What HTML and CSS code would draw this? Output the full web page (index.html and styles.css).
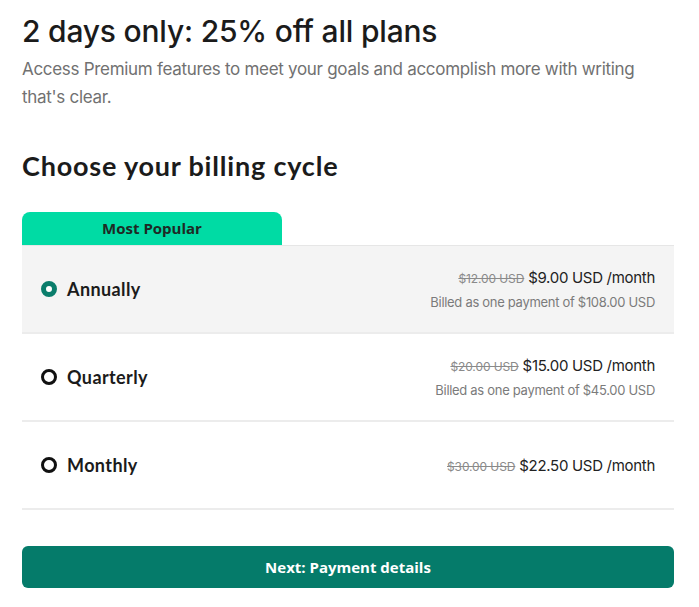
FILE: index.html
```html
<!DOCTYPE html>
<html>
<head lang="en">
    <meta charset="UTF-8">
    <title>Choose your billing cycle</title>
    <link rel="stylesheet" href="styles.css">
</head>
<body>

<div class="page">
    <h1 class="promo-title">2 days only: 25% off all plans</h1>
    <p class="promo-text">Access Premium features to meet your goals and accomplish more with writing that's clear.</p>

    <h2 class="cycle-title">Choose your billing cycle</h2>

    <div class="popular-tab">Most Popular</div>
    <div class="plan-list">
        <div class="plan selected">
            <div class="plan-name"><span class="radio"></span>Annually</div>
            <div class="plan-price">
                <div class="price-line"><s class="old-price">$12.00 USD</s> $9.00 USD /month</div>
                <div class="billed">Billed as one payment of $108.00 USD</div>
            </div>
        </div>
        <div class="plan">
            <div class="plan-name"><span class="radio"></span>Quarterly</div>
            <div class="plan-price">
                <div class="price-line"><s class="old-price">$20.00 USD</s> $15.00 USD /month</div>
                <div class="billed">Billed as one payment of $45.00 USD</div>
            </div>
        </div>
        <div class="plan">
            <div class="plan-name"><span class="radio"></span>Monthly</div>
            <div class="plan-price">
                <div class="price-line"><s class="old-price">$30.00 USD</s> $22.50 USD /month</div>
            </div>
        </div>
    </div>

    <a class="next-button" href="javascript:void(0);">Next: Payment details</a>
</div>

</body>
</html>
```

FILE: styles.css
```css
html, body, h1, h2, p, div, a {
    padding: 0px;
    margin: 0px;
}

body {
    background: #ffffff;
    color: #1a1a1a;
    font-family: Inter, "Liberation Sans", sans-serif;
}

.page {
    width: 652px;
    padding: 13px 0px 0px 22px;
}

.promo-title {
    font-size: 30px;
    font-weight: 500;
    line-height: 36px;
    letter-spacing: -0.2px;
    color: #1b1b1b;
}

.promo-text {
    margin-top: 6px;
    font-size: 17px;
    line-height: 28px;
    color: #717171;
    letter-spacing: -0.3px;
    max-width: 645px;
}

.cycle-title {
    margin-top: 39px;
    font-family: Lato, "Liberation Sans", sans-serif;
    font-size: 27px;
    font-weight: 700;
    line-height: 32px;
    letter-spacing: 0.8px;
    color: #1b1b1b;
}

.popular-tab {
    margin-top: 30px;
    width: 260px;
    height: 33px;
    line-height: 33px;
    background: #00dba4;
    border-radius: 8px 8px 0px 0px;
    text-align: center;
    font-family: "Open Sans", "Liberation Sans", sans-serif;
    font-size: 15px;
    font-weight: 700;
    color: #1e2a25;
}

.plan-list {
    border-top: 1px solid #e6e6e6;
}

.plan {
    height: 86px;
    display: flex;
    align-items: center;
    justify-content: space-between;
    padding: 0px 19px 0px 19px;
    border-bottom: 2px solid #ececec;
}

.plan.selected {
    background: #f4f4f4;
}

.plan-name {
    display: flex;
    align-items: center;
    font-family: Lato, "Liberation Sans", sans-serif;
    font-size: 18px;
    font-weight: 700;
    letter-spacing: 0.4px;
    color: #1b1b1b;
}

.radio {
    width: 10px;
    height: 10px;
    border: 3.5px solid #111111;
    border-radius: 50%;
    margin-right: 10px;
    background: #ffffff;
}

.selected .radio {
    width: 6px;
    height: 6px;
    border: 5.5px solid #0a7d6b;
}

.plan-price {
    text-align: right;
}

.price-line {
    font-size: 15px;
    color: #222222;
    letter-spacing: -0.3px;
}

.old-price {
    font-size: 12px;
    color: #8a8a8a;
    letter-spacing: -0.1px;
}

.billed {
    margin-top: 7px;
    font-size: 13px;
    color: #7b7b7b;
    letter-spacing: -0.3px;
}

.next-button {
    display: block;
    margin-top: 36px;
    height: 42px;
    line-height: 42px;
    background: #057b6a;
    border-radius: 6px;
    text-align: center;
    text-decoration: none;
    font-family: "Open Sans", "Liberation Sans", sans-serif;
    font-size: 15px;
    font-weight: 700;
    color: #ffffff;
}
```
